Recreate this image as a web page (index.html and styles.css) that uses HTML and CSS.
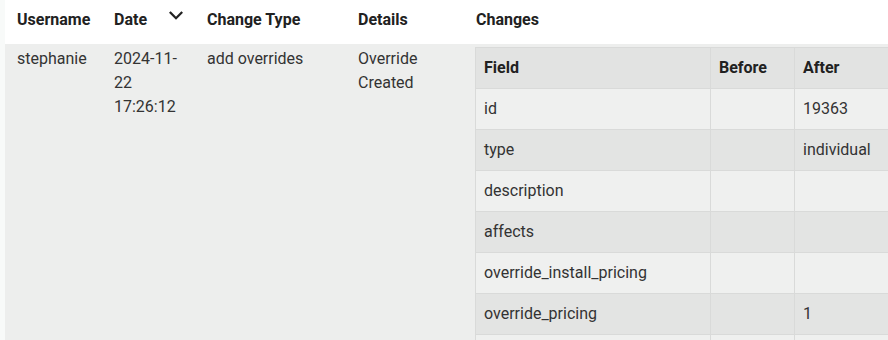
FILE: index.html
```html
<!DOCTYPE html>
<html lang="en">
<head>
<meta charset="utf-8">
<title>Change log</title>
<link rel="stylesheet" href="styles.css">
</head>
<body>
<div class="page">
  <table class="log">
    <colgroup>
      <col class="c-user">
      <col class="c-date">
      <col class="c-type">
      <col class="c-details">
      <col class="c-changes">
    </colgroup>
    <thead>
      <tr>
        <th>Username</th>
        <th>
          <div class="sort">
            <span>Date</span>
            <svg class="chev" width="14" height="10" viewBox="0 0 14 10" aria-hidden="true">
              <path d="M1.6 1.8 L7 7.2 L12.4 1.8" fill="none" stroke="#222" stroke-width="2.3" stroke-linecap="square"/>
            </svg>
          </div>
        </th>
        <th>Change Type</th>
        <th>Details</th>
        <th>Changes</th>
      </tr>
    </thead>
    <tbody>
      <tr>
        <td>stephanie</td>
        <td>2024-11-22 17:26:12</td>
        <td>add overrides</td>
        <td>Override Created</td>
        <td class="changes">
          <table class="diff">
            <colgroup>
              <col class="d-field">
              <col class="d-before">
              <col class="d-after">
            </colgroup>
            <thead>
              <tr><th>Field</th><th>Before</th><th>After</th></tr>
            </thead>
            <tbody>
              <tr><td>id</td><td></td><td>19363</td></tr>
              <tr><td>type</td><td></td><td>individual</td></tr>
              <tr><td>description</td><td></td><td></td></tr>
              <tr><td>affects</td><td></td><td></td></tr>
              <tr><td>override_install_pricing</td><td></td><td></td></tr>
              <tr><td>override_pricing</td><td></td><td>1</td></tr>
              <tr class="blank"><td></td><td></td><td></td></tr>
            </tbody>
          </table>
        </td>
      </tr>
    </tbody>
  </table>
</div>
</body>
</html>
```
FILE: styles.css
```css
html, body {
  margin: 0;
  padding: 0;
  overflow: hidden;
  background: #f8faf9;
}

body {
  font-family: Roboto, "Liberation Sans", Arial, sans-serif;
  font-size: 16px;
  line-height: 24px;
  color: #333;
}

.page {
  padding-left: 5px;
  width: 1000px;
}

.log {
  border-collapse: collapse;
  table-layout: fixed;
  width: 995px;
  background: #fff;
}

.c-user { width: 97px; }
.c-date { width: 93px; }
.c-type { width: 151px; }
.c-details { width: 118px; }
.c-changes { width: 536px; }

.log > thead > tr > th {
  text-align: left;
  font-weight: 700;
  color: #212121;
  padding: 8px 11px 12px 12px;
  vertical-align: top;
}

.sort {
  display: flex;
  justify-content: space-between;
  align-items: flex-start;
}

.chev {
  display: block;
  margin-top: 3px;
  margin-right: 1px;
}

.log > tbody > tr > td {
  background: #edeeed;
  padding: 3px 11px 0 12px;
  vertical-align: top;
}

.log > tbody > tr > td.changes {
  padding-left: 11px;
  padding-right: 0;
}

.diff {
  border-collapse: collapse;
  table-layout: fixed;
  width: 440px;
  background: #eff0ef;
}

.d-field { width: 235px; }
.d-before { width: 84px; }
.d-after { width: 121px; }

.diff th,
.diff td {
  border: 1px solid #d9dad9;
  padding: 8px 8px;
  text-align: left;
  vertical-align: top;
}

.diff .blank td {
  height: 24px;
}

.diff th {
  background: #e2e3e2;
  font-weight: 700;
  color: #212121;
}

.diff tbody tr:nth-child(even) td {
  background: #e3e4e3;
}

.diff tbody tr:nth-child(odd) td {
  background: #eff0ef;
}
```
